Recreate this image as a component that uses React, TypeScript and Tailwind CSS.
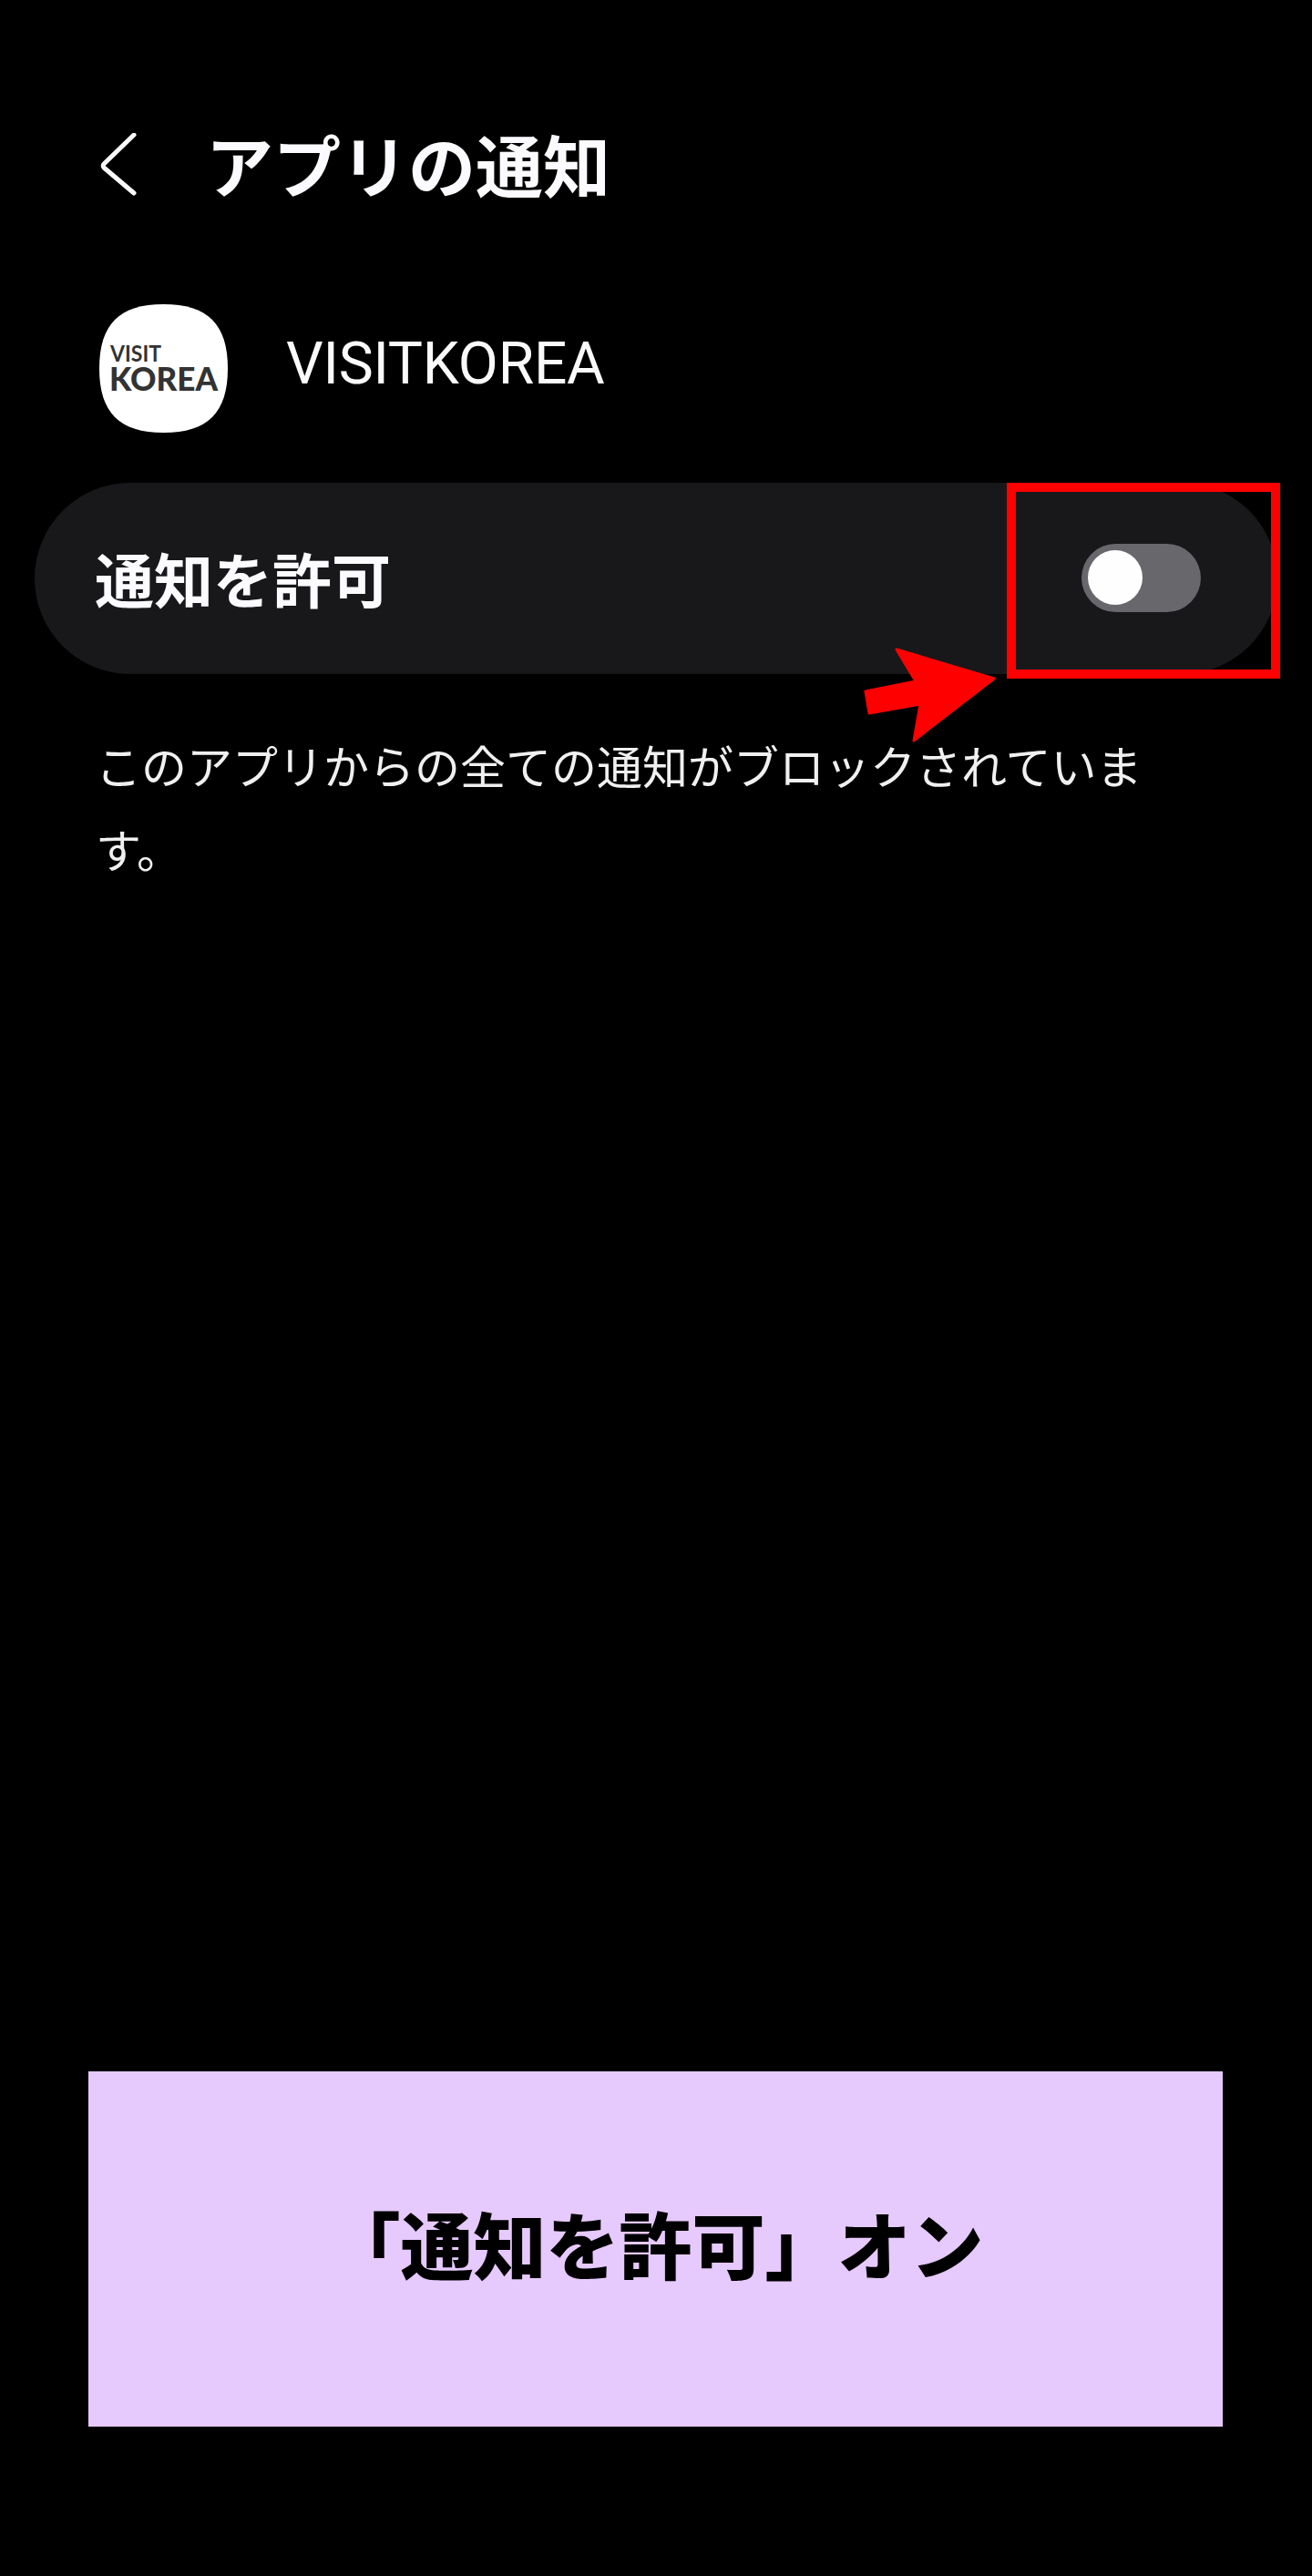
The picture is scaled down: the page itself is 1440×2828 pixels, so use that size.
export default function App() {
  return (
    <div className="relative flex h-[2828px] w-[1440px] flex-col bg-black font-['Roboto','Noto_Sans_CJK_JP',sans-serif] text-white">
      <header className="mt-[142px] flex h-[80px] items-center pl-[108px]">
        <svg width="46" height="72" viewBox="0 0 46 72" fill="none" className="shrink-0">
          <path d="M39 4 L6 36 Q4.5 38 6 40 L39 68" transform="translate(0 -2)" stroke="#fafafa" strokeWidth="5" strokeLinecap="round" strokeLinejoin="round" />
        </svg>
        <h1 className="ml-[72px] pt-[8px] text-[74px] leading-[80px] font-bold tracking-normal text-[#fbfbff]">アプリの通知</h1>
      </header>

      <div className="mt-[112px] flex items-center pl-[109px]">
        <svg width="141" height="141" viewBox="0 0 141 141" className="shrink-0">
          <path d="M70.5 0C119 0 141 22 141 70.5C141 119 119 141 70.5 141C22 141 0 119 0 70.5C0 22 22 0 70.5 0Z" fill="#ffffff" />
          <text x="12" y="63" fontSize="24" fontWeight="700" fill="#333333" fontFamily="Lato, sans-serif" textLength="56" lengthAdjust="spacingAndGlyphs">VISIT</text>
          <text x="11" y="95" fontSize="36" fontWeight="900" fill="#333333" fontFamily="Lato, sans-serif" textLength="119" lengthAdjust="spacingAndGlyphs">KOREA</text>
        </svg>
        <span className="ml-[64px] pb-[9px] text-[64px] leading-[76px] tracking-[-0.2px] text-[#fafafa]">VISITKOREA</span>
      </div>

      <section className="mx-[38px] mt-[55px] flex h-[210px] items-center justify-between rounded-[105px] bg-[#18181b] pr-[84px] pl-[66px]">
        <span className="pt-[10px] text-[65px] leading-[80px] font-bold text-[#fbfbff]">通知を許可</span>
        <div className="mb-[2px] flex h-[75px] w-[131px] items-center rounded-full bg-[#67676c] pl-[7px]">
          <div className="h-[60px] w-[60px] rounded-full bg-[#fefeff]" />
        </div>
      </section>

      <p className="mt-[58px] w-[1290px] pl-[105px] text-[50px] leading-[92px] font-normal text-[#f0f0f0]">
        このアプリからの全ての通知がブロックされています。
      </p>

      <div className="mx-[97px] mt-auto mb-[164px] flex h-[390px] w-[1245px] items-center justify-center bg-[#e6c9fd]">
        <span className="text-[80px] leading-[96px] font-black text-black">「通知を許可」オン</span>
      </div>

      <div className="absolute top-[530px] left-[1105px] h-[215px] w-[300px] border-[10px] border-[#ff0000]" />
      <svg className="absolute top-[700px] left-[940px]" width="160" height="120" viewBox="940 700 160 120">
        <path d="M1091 745 L984 713 L1005 748 L950 759 L954 783 L1010 773 L1003 813 Z" fill="#ff0000" stroke="#ff0000" strokeWidth="3" strokeLinejoin="round" />
      </svg>
    </div>
  );
}
